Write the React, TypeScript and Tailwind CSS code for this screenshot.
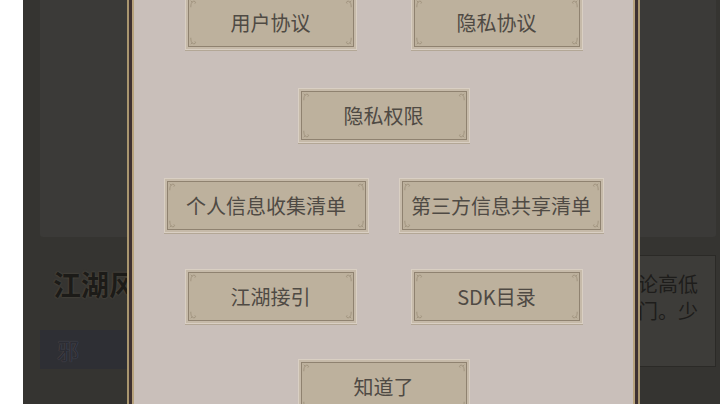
import React from "react";

// Little curl drawn in each inner corner of a scroll button
function Corner({ className }: { className: string }) {
  return (
    <svg
      viewBox="0 0 10 10"
      className={`pointer-events-none absolute h-[8px] w-[8px] opacity-70 ${className}`}
      fill="none"
      stroke="#8e806b"
      strokeWidth="1"
    >
      <path d="M1 9 C1 4 2.5 1.5 5 1.5 C7 1.5 7.5 3.5 6 4.5" />
      <path d="M1 1 L3 3" />
    </svg>
  );
}

function ScrollButton({ label, wide = false }: { label: string; wide?: boolean }) {
  return (
    <div
      className={`${wide ? "w-[205px]" : "w-[172px]"} h-[55px] shrink-0 border border-[#d9cfc3] bg-[#c6baa9] p-[2px] shadow-[0_1px_0_#b3a796]`}
    >
      <div className="relative flex h-full items-center justify-center border border-[#8f8270] bg-[#bdb19d]">
        <Corner className="left-[1px] top-[1px]" />
        <Corner className="right-[1px] top-[1px] -scale-x-100" />
        <Corner className="bottom-[1px] left-[1px] -scale-y-100" />
        <Corner className="bottom-[1px] right-[1px] -scale-100" />
        <span className="text-[20px] leading-none text-[#4f4a44]">{label}</span>
      </div>
    </div>
  );
}

export default function App() {
  return (
    <div className="relative flex h-[404px] w-[720px] overflow-hidden bg-white font-['Noto_Sans_CJK_SC','Noto_Sans',sans-serif]">
      <div className="w-[23px] shrink-0 bg-white" />

      {/* Page underneath the dialog */}
      <div className="flex-1 bg-[#353431] pl-[17px] pr-[4px]">
        <div className="h-[237px] rounded-b-[3px] bg-[#3b3a38]" />

        <div className="mt-[18px] flex items-start justify-between">
          <div className="w-[340px]">
            <h2 className="mt-[12px] pl-[13px] text-[28px] font-bold leading-[34px] text-[#1c1b18] [text-shadow:0_0_2px_#5e5748]">
              江湖风云
            </h2>
            <div className="mt-[29px] flex h-[39px] items-center bg-[#2e2f34] pl-[17px]">
              <span className="text-[22px] text-[#2b2c33] [text-shadow:0_0_1px_#5c5d66]">邪</span>
            </div>
          </div>

          <div className="h-[112px] w-[320px] border border-[#2b2a27] bg-[#3d3c39] pr-[17px] pt-[14px] text-right text-[20px] leading-[27px] text-[#1e1d1b]">
            <p className="whitespace-nowrap">不论高低</p>
            <p className="whitespace-nowrap">入门。少</p>
          </div>
        </div>
      </div>

      {/* Dialog */}
      <div className="absolute left-[127px] top-[-10px] h-[430px] w-[513px] border-x-[2px] border-[#a9966f]">
        <div className="h-full border-x-[3px] border-[#3e3131]">
          <div className="flex h-full flex-col items-center border-x-[2px] border-[#b8a37d] bg-[#c9bfba] pt-[5px]">
            <div className="mb-[3px] flex gap-[54px]">
              <ScrollButton label="用户协议" />
              <ScrollButton label="隐私协议" />
            </div>
            <div className="mt-[35px]">
              <ScrollButton label="隐私权限" />
            </div>
            <div className="mt-[35px] flex gap-[30px]">
              <ScrollButton label="个人信息收集清单" wide />
              <ScrollButton label="第三方信息共享清单" wide />
            </div>
            <div className="mt-[36px] flex gap-[54px]">
              <ScrollButton label="江湖接引" />
              <ScrollButton label="SDK目录" />
            </div>
            <div className="mt-[35px]">
              <ScrollButton label="知道了" />
            </div>
          </div>
        </div>
      </div>
    </div>
  );
}
